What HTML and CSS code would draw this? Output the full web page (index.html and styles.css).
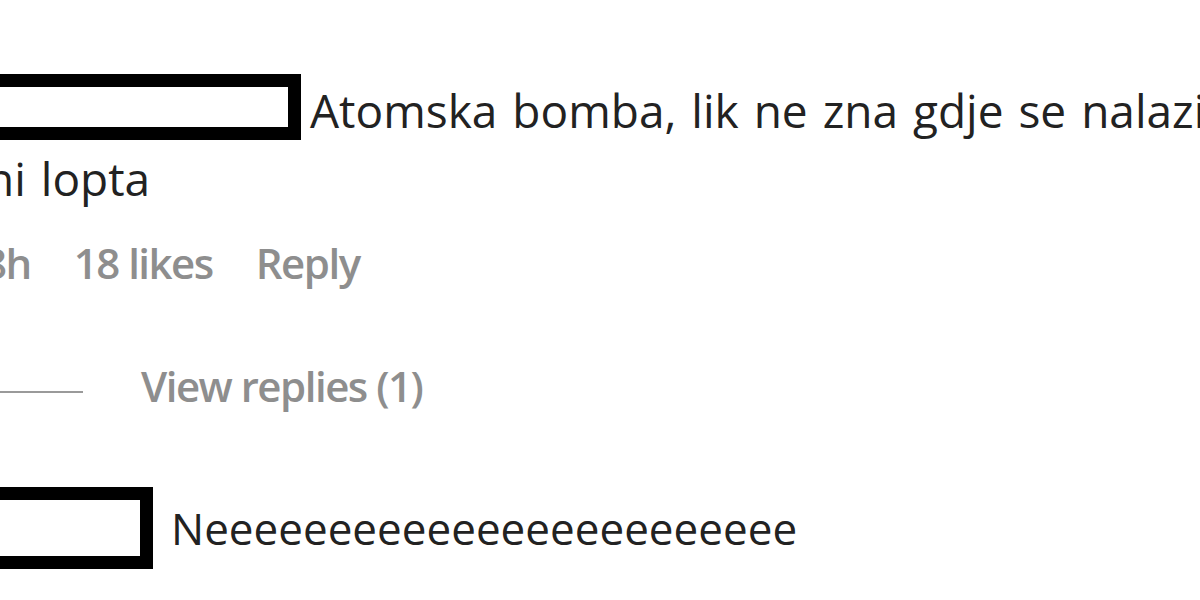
FILE: index.html
```html
<!DOCTYPE html>
<html lang="hr">
<head>
<meta charset="utf-8">
<title>Comments</title>
<link rel="stylesheet" href="styles.css">
</head>
<body>
<div class="thread">
  <p class="comment"><span class="mask mask-wide"></span>Atomska bomba, lik ne zna gdje se nalazi ni lopta</p>
  <div class="meta">
    <span class="meta-item meta-time">8h</span>
    <span class="meta-item">18 likes</span>
    <span class="meta-item">Reply</span>
  </div>
  <div class="replies">
    <span class="replies-line"></span>
    <span class="replies-label">View replies (1)</span>
  </div>
  <div class="reply">
    <span class="mask mask-small"></span>
    <span class="reply-text">Neeeeeeeeeeeeeeeeeeeeeeee</span>
  </div>
</div>
</body>
</html>
```
FILE: styles.css
```css
html, body {
  margin: 0;
  background: #ffffff;
}
body {
  overflow: hidden;
  width: 1200px;
  height: 600px;
  font-family: "Open Sans", "Noto Sans", sans-serif;
  color: #222222;
}
.thread {
  padding-top: 74px;
  margin-left: -14px;
  width: 1225px;
}
.comment {
  margin: 0;
  font-size: 46px;
  line-height: 68px;
  word-spacing: 3px;
}
.mask {
  display: inline-block;
  box-sizing: border-box;
  border: 13px solid #000;
  background: #fff;
}
.mask-wide {
  width: 315px;
  height: 66px;
  vertical-align: -12px;
  margin-right: 9px;
}
.meta {
  display: flex;
  gap: 43px;
  margin-top: 17px;
  margin-left: -3px;
  font-size: 42px;
  line-height: 68px;
  font-weight: 600;
  letter-spacing: -1.5px;
  color: #8e8e8e;
}
.replies {
  display: flex;
  align-items: flex-start;
  margin-top: 55px;
  font-size: 42px;
  line-height: 68px;
  font-weight: 600;
  letter-spacing: -1.5px;
  color: #8e8e8e;
}
.replies-line {
  width: 97px;
  height: 2px;
  margin-top: 39px;
  margin-right: 58px;
  background: #9a9a9a;
}
.reply {
  display: flex;
  align-items: flex-start;
  margin-top: 67px;
}
.mask-small {
  width: 167px;
  height: 82px;
  margin-right: 18px;
}
.reply-text {
  margin-top: 7px;
  font-size: 44px;
  line-height: 68px;
}
```
